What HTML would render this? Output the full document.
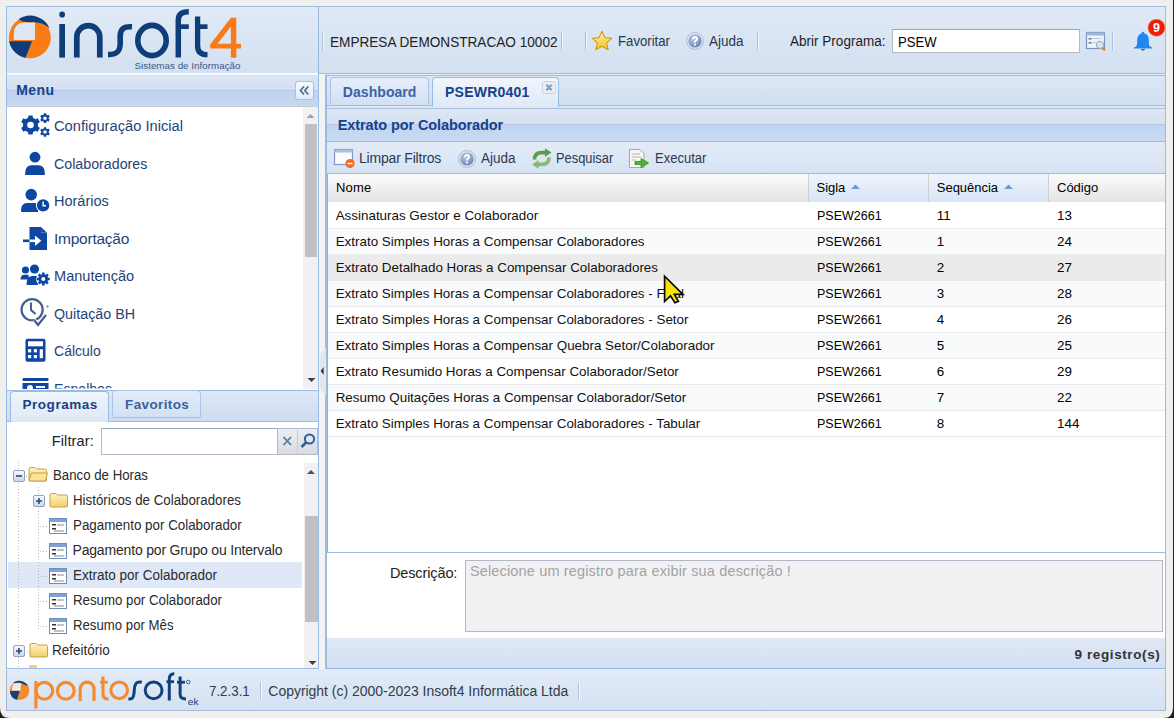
<!DOCTYPE html>
<html><head><meta charset="utf-8">
<style>
*{box-sizing:border-box;margin:0;padding:0}
html,body{width:1174px;height:718px;overflow:hidden}
body{position:relative;background:#efefed;font-family:"Liberation Sans",sans-serif;color:#000}
.a{position:absolute}
.t{position:absolute;white-space:nowrap;line-height:1}
/* panels */
#logo{left:6px;top:6px;width:314px;height:68px;border:1px solid #9fbbe2;border-right:2px solid #9ab8e0;background:linear-gradient(#e1eaf6,#d3e0f1)}
#hdr{left:319px;top:6px;width:847px;height:68px;border:1px solid #9fbbe2;border-left:none;background:linear-gradient(#e0e9f6,#d3e0f1)}
#menu{left:6px;top:73px;width:313px;height:318px;border:1px solid #99bbe8;border-top:none;background:#fff}
#menuh{left:6px;top:74px;width:313px;height:33px;border-left:1px solid #99bbe8;border-right:1px solid #99bbe8;background:linear-gradient(#eef6fc 0 1px,#dce6f4 1px,#d3e0f1 16px,#b9c5e6 16px 17px,#bfd2ee 17px,#c6d8f1 32px,#c5ccd8 32px)}
#split{left:319px;top:74px;width:7px;height:595px;background:#f4f3f4}
#progs{left:6px;top:390px;width:313px;height:279px;border:1px solid #99bbe8;border-top:none;background:#fff}
#tabstrip1{left:6px;top:390px;width:313px;height:32px;border:1px solid #99bbe8;background:linear-gradient(#dfe8f6,#cedcf0)}
#footer{left:6px;top:669px;width:1160px;height:42px;border:1px solid #a3b9d9;border-top:1px solid #e6eef9;background:linear-gradient(#e2ebf7,#d4e1f2)}
#right{left:325px;top:74px;width:841px;height:595px;border:1px solid #99bbe8;border-left:2px solid #99bbe8;background:#fff}
#tabstrip2{left:325px;top:74px;width:841px;height:35px;border-top:1px solid #e4edf8;border-left:2px solid #99bbe8;border-right:1px solid #99bbe8;background:linear-gradient(#a9bdd8 0 1px,#dde7f5 1px,#d0def1 30px,#a8bcd8 30px 31px,#dfe9f6 31px 33px,#a9c0df 33px)}
#ptitle{left:325px;top:109px;width:841px;height:33px;border-left:2px solid #99bbe8;border-right:1px solid #99bbe8;border-bottom:1px solid #99bbe8;background:linear-gradient(#dde7f4 0,#d5e1f1 15px,#b9c5e6 15px 16px,#c1d4ef 16px,#c9dbf3 32px)}
#tbar{left:325px;top:142px;width:841px;height:32px;border-left:2px solid #99bbe8;border-right:1px solid #99bbe8;border-bottom:1px solid #99bbe8;background:linear-gradient(#e3ebf6,#d7e3f3)}
#ghead{left:327px;top:174px;width:838px;height:28px;background:linear-gradient(#fafafa,#e6e6e6)}
.hcell{position:absolute;top:0;height:28px;border-right:1px solid #c5c5c5}
.sorted{background:linear-gradient(#ebf3fd,#dae6f6)}
.row{position:absolute;left:327px;width:838px;height:26px;border-bottom:1px solid #ededed}
.cell{position:absolute;top:6px;font-size:13.3px;line-height:1;white-space:nowrap;color:#000}
#desc{left:325px;top:552px;width:841px;height:86px;border-left:2px solid #99bbe8;border-right:1px solid #99bbe8;border-top:1px solid #99bbe8;background:#fff}
#status{left:325px;top:638px;width:841px;height:31px;border-left:2px solid #99bbe8;border-right:1px solid #99bbe8;border-bottom:1px solid #8db2e3;background:linear-gradient(#dfe8f5,#d3e0f2)}
.sb{position:absolute;background:#f0f0f0}
.thumb{position:absolute;background:#c1c1c1}
.sep{position:absolute;width:1px;background:#b6c9e3;border-right:1px solid #f3f7fc}
</style></head><body>
<div id="logo" class="a"></div>
<div id="hdr" class="a"></div>
<div id="menu" class="a"></div>
<div id="menuh" class="a"></div>
<div id="split" class="a"></div>
<div id="progs" class="a"></div>
<div id="tabstrip1" class="a"></div>
<div id="right" class="a"></div>
<div id="tabstrip2" class="a"></div>
<div id="ptitle" class="a"></div>
<div id="tbar" class="a"></div>
<div id="ghead" class="a"></div>
<div id="desc" class="a"></div>
<div id="status" class="a"></div>
<div id="footer" class="a"></div>
<svg class="a" style="left:0;top:0" width="320" height="75" viewBox="0 0 320 75">
<circle cx="29.9" cy="37.4" r="20.9" fill="#fa7a14"/>
<path d="M18.5,19.3 A20.9,20.9 0 0 1 49.6,28.2 Q43,22 34,22.2 Q27,22.4 22.6,21.6 Z" fill="#0f3d79"/>
<path d="M13.8,40 L13.8,33 Q14.5,23 24,22.6 L35,22.6 L35,40 Z" fill="#dde7f4"/>
<path d="M9.1,41.2 L32,41.2 L25.6,57.7 A20.9,20.9 0 0 1 9.1,41.2 Z" fill="#0f3d79"/>
<g fill="none" stroke="#0f3d79" stroke-width="5.7">
<path d="M62.15,24 V57.6"/>
<path d="M76.8,57.6 V37.2 A11.5,11.5 0 0 1 99.8,37.2 V57.6"/>
<path d="M132,26.8 C124,26.3 120.3,28.5 120.2,36 L120.2,44 C120,52 116,54.6 108,54.6" stroke-width="5.6"/>
<ellipse cx="152" cy="40.5" rx="14.2" ry="15.1" stroke-width="5.6"/>
<path d="M178.3,57.4 V20 Q178.3,11.8 188.8,11.8" stroke-width="5.5"/>
<path d="M178,26.65 H188.8" stroke-width="4.7"/>
<path d="M197.6,16.5 V46 Q197.6,54.7 207.5,54.7" stroke-width="5.3"/>
<path d="M195,26.65 H207.5" stroke-width="4.7"/>
</g>
<rect x="59.3" y="11.6" width="5.7" height="6" rx="2.8" fill="#0f3d79"/>
<path fill="#fa7a14" fill-rule="evenodd" d="M230.9,17.7 L236.3,17.7 L236.3,43.8 L241,43.8 L241,48.5 L236.3,48.5 L236.3,57.8 L230.9,57.8 L230.9,48.5 L210.2,48.5 L210.2,44.6 Z M230.9,26.5 L230.9,43.8 L217.6,43.8 Z"/>
<text x="134.5" y="69.3" font-family="Liberation Sans" font-size="9.6" fill="#3c5a8a" textLength="106" lengthAdjust="spacingAndGlyphs">Sistemas de Informação</text>
</svg>
<div class="a" style="left:322px;top:32px;width:1px;height:18px;background:#a9bedb;box-shadow:1px 0 0 #f5f8fc"></div>
<div class="a" style="left:561px;top:32px;width:1px;height:18px;background:#a9bedb;box-shadow:1px 0 0 #f5f8fc"></div>
<div class="a" style="left:585px;top:32px;width:1px;height:18px;background:#a9bedb;box-shadow:1px 0 0 #f5f8fc"></div>
<div class="a" style="left:757px;top:32px;width:1px;height:18px;background:#a9bedb;box-shadow:1px 0 0 #f5f8fc"></div>
<div class="a" style="left:1112px;top:32px;width:1px;height:18px;background:#a9bedb;box-shadow:1px 0 0 #f5f8fc"></div>
<svg class="a" style="left:591px;top:30px" width="22" height="22" viewBox="0 0 22 22">
<defs><linearGradient id="gs" x1="0" y1="0" x2="0" y2="1"><stop offset="0" stop-color="#fff3a8"/><stop offset="1" stop-color="#f6c02a"/></linearGradient></defs>
<path d="M11,1.2 L13.9,7.6 L20.8,8.2 L15.6,12.8 L17.2,19.8 L11,16.2 L4.8,19.8 L6.4,12.8 L1.2,8.2 L8.1,7.6 Z" fill="url(#gs)" stroke="#d49a10" stroke-width="1.1" stroke-linejoin="round"/>
</svg>
<svg class="a" style="left:686px;top:32px" width="18" height="18" viewBox="0 0 18 18">
<defs><radialGradient id="gh686" cx="0.4" cy="0.35" r="0.75"><stop offset="0" stop-color="#b9cbe6"/><stop offset="1" stop-color="#5f80b4"/></radialGradient></defs>
<circle cx="9" cy="9" r="8.4" fill="#e3e9f2" stroke="#a7b8d0" stroke-width="1"/>
<circle cx="9" cy="9" r="6.6" fill="url(#gh686)"/>
<path d="M6.9,7.2 Q7,5 9.1,5 Q11.2,5.1 11.2,6.9 Q11.1,8.2 9.8,8.8 Q9,9.3 9,10.4" fill="none" stroke="#fff" stroke-width="1.8"/>
<circle cx="9" cy="12.6" r="1.1" fill="#fff"/>
</svg>
<div class="a" style="left:892px;top:29px;width:188px;height:24px;background:#fff;border:1px solid #b4b9c4;border-top-color:#9ea5b3"></div>
<svg class="a" style="left:1085px;top:31px" width="23" height="21" viewBox="0 0 23 21">
<rect x="1.5" y="1.5" width="18" height="16" fill="#eef3fa" stroke="#7b94bd" stroke-width="1.2"/>
<rect x="1.5" y="1.5" width="18" height="3" fill="#9fb6d9"/>
<rect x="3.5" y="7" width="3" height="1.6" fill="#6a86b5"/><rect x="7.5" y="7" width="9" height="1" fill="#b9c7dc"/>
<rect x="3.5" y="11" width="3" height="1.6" fill="#6a86b5"/><rect x="7.5" y="11" width="4" height="1" fill="#b9c7dc"/>
<circle cx="15" cy="14" r="3.6" fill="#d7e5f5" stroke="#8fa9cc" stroke-width="1"/>
<path d="M17.5,16.5 L20,19.5" stroke="#d08a3a" stroke-width="2"/>
</svg>
<svg class="a" style="left:1132px;top:30px" width="22" height="22" viewBox="0 0 22 22">
<path d="M11,1.8 Q12.3,1.8 12.3,3.2 Q16.8,4.6 16.8,10.5 L17,15 Q18,17 20.2,17.6 L20.2,18.6 L1.8,18.6 L1.8,17.6 Q4,17 5,15 L5.2,10.5 Q5.2,4.6 9.7,3.2 Q9.7,1.8 11,1.8 Z" fill="#1e88f0"/>
<path d="M8.6,19 Q11,22.6 13.4,19 Z" fill="#1a6fd0"/>
</svg>
<svg class="a" style="left:1147px;top:18px" width="20" height="20" viewBox="0 0 20 20">
<circle cx="9.5" cy="9.7" r="8.6" fill="#ee1b0c" stroke="#f89a5a" stroke-width="0.8"/>
<text x="9.6" y="14" text-anchor="middle" font-family="Liberation Sans" font-weight="bold" font-size="12.5" fill="#fff">9</text>
</svg>
<div class="a" style="left:295px;top:81px;width:19px;height:19px;border:1px solid #a7c0e3;border-radius:3px;background:linear-gradient(#f7faff,#e3ecf8)"></div>
<svg class="a" style="left:295px;top:81px" width="19" height="19" viewBox="0 0 19 19">
<path d="M9,5.5 L5.5,9.5 L9,13.5 M13.3,5.5 L9.8,9.5 L13.3,13.5" fill="none" stroke="#4a6a9c" stroke-width="1.7"/>
</svg>
<svg class="a" style="left:0;top:0" width="60" height="140" viewBox="0 0 60 140">
<path fill="#0d47a1" fill-rule="evenodd" d="M32.92,117.80 L32.64,115.44 L28.36,115.44 L28.08,117.80 L25.47,119.30 L23.29,118.37 L21.15,122.07 L23.05,123.50 L23.05,126.50 L21.15,127.93 L23.29,131.63 L25.47,130.70 L28.08,132.20 L28.36,134.56 L32.64,134.56 L32.92,132.20 L35.53,130.70 L37.71,131.63 L39.85,127.93 L37.95,126.50 L37.95,123.50 L39.85,122.07 L37.71,118.37 L35.53,119.30 Z M33.8,125 A3.3,3.3 0 1 0 27.2,125 A3.3,3.3 0 1 0 33.8,125 Z"/>
<path fill="#0d47a1" fill-rule="evenodd" d="M46.21,114.60 L46.17,113.34 L43.83,113.34 L43.79,114.60 L42.49,115.35 L41.37,114.76 L40.21,116.78 L41.27,117.45 L41.27,118.95 L40.21,119.62 L41.37,121.64 L42.49,121.05 L43.79,121.80 L43.83,123.06 L46.17,123.06 L46.21,121.80 L47.51,121.05 L48.63,121.64 L49.79,119.62 L48.73,118.95 L48.73,117.45 L49.79,116.78 L48.63,114.76 L47.51,115.35 Z M46.8,118.2 A1.8,1.8 0 1 0 43.2,118.2 A1.8,1.8 0 1 0 46.8,118.2 Z"/>
<path fill="#0d47a1" fill-rule="evenodd" d="M46.21,128.40 L46.17,127.14 L43.83,127.14 L43.79,128.40 L42.49,129.15 L41.37,128.56 L40.21,130.58 L41.27,131.25 L41.27,132.75 L40.21,133.42 L41.37,135.44 L42.49,134.85 L43.79,135.60 L43.83,136.86 L46.17,136.86 L46.21,135.60 L47.51,134.85 L48.63,135.44 L49.79,133.42 L48.73,132.75 L48.73,131.25 L49.79,130.58 L48.63,128.56 L47.51,129.15 Z M46.8,132 A1.8,1.8 0 1 0 43.2,132 A1.8,1.8 0 1 0 46.8,132 Z"/>
</svg>
<svg class="a" style="left:24px;top:151px" width="22" height="25" viewBox="0 0 22 25">
<circle cx="11" cy="6.2" r="5.4" fill="#0d47a1"/>
<path d="M1,23.2 Q1,14.5 7,14.2 L15,14.2 Q21,14.5 21,23.2 Q21,24 20,24 L2,24 Q1,24 1,23.2 Z" fill="#0d47a1"/>
</svg>
<svg class="a" style="left:20px;top:188px" width="31" height="25" viewBox="0 0 31 25">
<circle cx="11.2" cy="6.6" r="5.8" fill="#0d47a1"/>
<path d="M1,22.5 Q1,15.5 6.5,15 L16,15 Q18,15.2 19,16 L18,24 L2,24 Q1,24 1,22.5 Z" fill="#0d47a1"/>
<circle cx="23.1" cy="17.4" r="7.2" fill="#fff"/>
<circle cx="23.1" cy="17.4" r="6.2" fill="#0d47a1"/>
<path d="M23.1,13.5 V17.8 H26" fill="none" stroke="#fff" stroke-width="1.4"/>
</svg>
<svg class="a" style="left:22px;top:226px" width="26" height="25" viewBox="0 0 26 25">
<path d="M7.5,1 L19,1 L25,7 L25,24 L7.5,24 Z" fill="#0d47a1"/>
<path d="M19,1 L19,7 L25,7" fill="#fff" opacity="0.9"/>
<path d="M19.2,1.2 L24.8,6.8 L19.2,6.8 Z" fill="#0d47a1"/>
<rect x="1" y="13.5" width="9" height="2.6" fill="#0d47a1"/>
<rect x="7.5" y="13.5" width="7" height="2.6" fill="#fff"/>
<path d="M13,9.5 L19.3,14.8 L13,20.1 Z" fill="#fff"/>
</svg>
<svg class="a" style="left:20px;top:264px" width="31" height="23" viewBox="0 0 31 23">
<g fill="#0d47a1">
<circle cx="5.5" cy="6" r="3.6"/><path d="M0.5,15.5 Q0.5,11 4.5,10.8 L8.5,10.8 L9,15.5 Z"/>
<circle cx="14.5" cy="5" r="4.6"/><path d="M6.5,21 Q6.5,12.2 12,12 L18,12 L18,21 Z"/>
</g>
<circle cx="23.3" cy="15" r="7.2" fill="#fff"/>
<g fill="#0d47a1"><circle cx="23.3" cy="15" r="4.8"/></g>
<g stroke="#0d47a1" stroke-width="2.6"><path d="M23.3,8.5 V21.5 M16.8,15 H29.8 M18.7,10.4 L27.9,19.6 M27.9,10.4 L18.7,19.6"/></g>
<circle cx="23.3" cy="15" r="2" fill="#fff"/>
</svg>
<svg class="a" style="left:19px;top:297px" width="30" height="30" viewBox="0 0 30 30">
<circle cx="13.1" cy="12.7" r="10.6" fill="none" stroke="#425f8f" stroke-width="2.2"/>
<path d="M12,5.5 V13 L16.5,17" fill="none" stroke="#425f8f" stroke-width="2"/>
<path d="M15,23 L19,28 L27,18" fill="none" stroke="#fff" stroke-width="4"/>
<path d="M15,23 L19,28 L27,18" fill="none" stroke="#425f8f" stroke-width="2.2"/>
<path d="M27,9.5 H30 M28.5,8 V11" stroke="#8ea3c4" stroke-width="1"/>
</svg>
<svg class="a" style="left:25px;top:338px" width="21" height="25" viewBox="0 0 21 25">
<rect x="0.5" y="0.8" width="20" height="23" rx="2" fill="#0d47a1"/>
<rect x="3" y="3.3" width="15" height="5" fill="#fff"/>
<rect x="3" y="11.2" width="3.2" height="3.2" fill="#fff"/><rect x="8.8" y="11.2" width="3.2" height="3.2" fill="#fff"/>
<rect x="3" y="17" width="3.2" height="3.2" fill="#fff"/><rect x="8.8" y="17" width="3.2" height="3.2" fill="#fff"/>
<rect x="14.7" y="11.2" width="3.2" height="9" fill="#fff"/>
</svg>
<div class="a" style="left:22px;top:377px;width:27px;height:12px;overflow:hidden">
<svg width="27" height="24" viewBox="0 0 27 24">
<rect x="0.5" y="1" width="26" height="3" rx="1" fill="#0d47a1"/>
<rect x="0.5" y="6" width="26" height="17" fill="#0d47a1"/>
<circle cx="8" cy="11" r="3" fill="#fff"/><rect x="14" y="9" width="9" height="2" fill="#fff"/>
</svg></div>
<div class="a" style="left:303px;top:107px;width:15px;height:282px;background:#f1f1f1"></div>
<div class="a" style="left:305px;top:124px;width:12px;height:133px;background:#c1c1c1"></div>
<svg class="a" style="left:303px;top:110px" width="15" height="10"><path d="M3.5,8 L7.5,4 L11.5,8 Z" fill="#a0a0a0"/></svg>
<svg class="a" style="left:303px;top:375px" width="15" height="10"><path d="M4.5,3 L8.5,7 L12.5,3 Z" fill="#404040"/></svg>
<svg class="a" style="left:318px;top:348px" width="9" height="47" viewBox="0 0 9 47">
<path d="M8,0 Q2,4 2,10 L2,37 Q2,43 8,47 Z" fill="#e3e6ea"/>
<path d="M5.6,19 L2.6,23 L5.6,27 Z" fill="#333"/>
</svg>
<div class="a" style="left:10px;top:391px;width:99px;height:31px;border:1px solid #99bbe8;border-bottom:none;border-radius:4px 4px 0 0;background:linear-gradient(#f1f5fb,#dde8f6)"></div>
<div class="a" style="left:112px;top:390px;width:89px;height:28px;border:1px solid #a9c4e8;border-radius:4px 4px 0 0;background:linear-gradient(#e4edf8,#d2e0f3)"></div>
<div class="a" style="left:101px;top:428px;width:176px;height:27px;background:#fff;border:1px solid #b5b8c8;border-top-color:#a0a5b5;border-right:none"></div>
<div class="a" style="left:277px;top:428px;width:21px;height:27px;background:linear-gradient(#eceef1,#d8dbe0);border:1px solid #b5b8c8;border-right:1px solid #c9ccd3"></div>
<div class="a" style="left:298px;top:428px;width:20px;height:27px;background:linear-gradient(#eceef1,#d8dbe0);border:1px solid #b5b8c8;border-left:none"></div>
<svg class="a" style="left:277px;top:428px" width="21" height="27"><path d="M6.5,9 L14,17 M14,9 L6.5,17" stroke="#5878a8" stroke-width="1.8"/></svg>
<svg class="a" style="left:298px;top:428px" width="20" height="27"><circle cx="11.5" cy="11" r="4.6" fill="none" stroke="#2f5f9f" stroke-width="2"/><path d="M8.3,14.3 L3.5,19" stroke="#2f5f9f" stroke-width="2.6"/></svg>
<div class="a" style="left:8px;top:562px;width:294px;height:26px;background:#dfe8f6"></div>
<div class="a" style="left:18px;top:462px;width:1px;height:206px;background:repeating-linear-gradient(#b8b8b8 0 1px,transparent 1px 3px)"></div>
<div class="a" style="left:38px;top:487px;width:1px;height:143px;background:repeating-linear-gradient(#b8b8b8 0 1px,transparent 1px 3px)"></div>
<div class="a" style="left:26px;top:476px;width:2px;height:1px;background:repeating-linear-gradient(90deg,#b8b8b8 0 1px,transparent 1px 3px)"></div>
<div class="a" style="left:40px;top:526px;width:8px;height:1px;background:repeating-linear-gradient(90deg,#b8b8b8 0 1px,transparent 1px 3px)"></div>
<div class="a" style="left:40px;top:551px;width:8px;height:1px;background:repeating-linear-gradient(90deg,#b8b8b8 0 1px,transparent 1px 3px)"></div>
<div class="a" style="left:40px;top:576px;width:8px;height:1px;background:repeating-linear-gradient(90deg,#b8b8b8 0 1px,transparent 1px 3px)"></div>
<div class="a" style="left:40px;top:601px;width:8px;height:1px;background:repeating-linear-gradient(90deg,#b8b8b8 0 1px,transparent 1px 3px)"></div>
<div class="a" style="left:40px;top:626px;width:8px;height:1px;background:repeating-linear-gradient(90deg,#b8b8b8 0 1px,transparent 1px 3px)"></div>
<div class="a" style="left:24px;top:651px;width:4px;height:1px;background:repeating-linear-gradient(90deg,#b8b8b8 0 1px,transparent 1px 3px)"></div>
<svg class="a" style="left:13px;top:470px" width="12" height="12" viewBox="0 0 12 12">
<defs><linearGradient id="ge470" x1="0" y1="0" x2="0" y2="1"><stop offset="0" stop-color="#fbfcfe"/><stop offset="1" stop-color="#c8d4e6"/></linearGradient></defs>
<rect x="0.5" y="0.5" width="11" height="11" rx="1.5" fill="url(#ge470)" stroke="#8fa2c0"/>
<path d="M3,6 H9" stroke="#2a4a80" stroke-width="1.6"/>
</svg>
<svg class="a" style="left:28px;top:466px" width="20" height="16" viewBox="0 0 20 16">
<defs><linearGradient id="gf466" x1="0" y1="0" x2="0" y2="1"><stop offset="0" stop-color="#fff4c4"/><stop offset="1" stop-color="#f2cf6a"/></linearGradient></defs>
<path d="M1,3 Q1,1.5 2.5,1.5 L7,1.5 L8.5,3 L17,3 Q18.5,3 18.5,4.5 L18.5,14 Q18.5,15 17.5,15 L2,15 Q1,15 1,14 Z" fill="url(#gf466)" stroke="#c9a04a" stroke-width="1"/>
<path d="M3.5,7 L19.5,7 L17.5,15 L1,15 Z" fill="#fbe39a" stroke="#c9a04a" stroke-width="1"/>
</svg>
<svg class="a" style="left:33px;top:495px" width="12" height="12" viewBox="0 0 12 12">
<defs><linearGradient id="ge495" x1="0" y1="0" x2="0" y2="1"><stop offset="0" stop-color="#fbfcfe"/><stop offset="1" stop-color="#c8d4e6"/></linearGradient></defs>
<rect x="0.5" y="0.5" width="11" height="11" rx="1.5" fill="url(#ge495)" stroke="#8fa2c0"/>
<path d="M3,6 H9 M6,3 V9" stroke="#2a4a80" stroke-width="1.6"/>
</svg>
<svg class="a" style="left:49px;top:492px" width="20" height="16" viewBox="0 0 20 16">
<defs><linearGradient id="gf492" x1="0" y1="0" x2="0" y2="1"><stop offset="0" stop-color="#fff4c4"/><stop offset="1" stop-color="#f2cf6a"/></linearGradient></defs>
<path d="M1,3 Q1,1.5 2.5,1.5 L7,1.5 L8.5,3 L17,3 Q18.5,3 18.5,4.5 L18.5,14 Q18.5,15 17.5,15 L2,15 Q1,15 1,14 Z" fill="url(#gf492)" stroke="#c9a04a" stroke-width="1"/>
<path d="M1.5,6 H18" stroke="#fbe8a8" stroke-width="1"/>
</svg>
<svg class="a" style="left:49px;top:518px" width="18" height="16" viewBox="0 0 18 16">
<rect x="0.5" y="0.5" width="17" height="15" fill="#fff" stroke="#6f8db8"/>
<rect x="1" y="1" width="16" height="3" fill="#7fa3d6"/>
<rect x="3" y="6" width="4" height="1.5" fill="#333"/><rect x="8" y="6.5" width="7" height="1" fill="#888"/>
<rect x="3" y="10" width="4" height="1.5" fill="#333"/><rect x="5" y="12.5" width="10" height="1" fill="#888"/>
</svg>
<svg class="a" style="left:49px;top:543px" width="18" height="16" viewBox="0 0 18 16">
<rect x="0.5" y="0.5" width="17" height="15" fill="#fff" stroke="#6f8db8"/>
<rect x="1" y="1" width="16" height="3" fill="#7fa3d6"/>
<rect x="3" y="6" width="4" height="1.5" fill="#333"/><rect x="8" y="6.5" width="7" height="1" fill="#888"/>
<rect x="3" y="10" width="4" height="1.5" fill="#333"/><rect x="5" y="12.5" width="10" height="1" fill="#888"/>
</svg>
<svg class="a" style="left:49px;top:568px" width="18" height="16" viewBox="0 0 18 16">
<rect x="0.5" y="0.5" width="17" height="15" fill="#fff" stroke="#6f8db8"/>
<rect x="1" y="1" width="16" height="3" fill="#7fa3d6"/>
<rect x="3" y="6" width="4" height="1.5" fill="#333"/><rect x="8" y="6.5" width="7" height="1" fill="#888"/>
<rect x="3" y="10" width="4" height="1.5" fill="#333"/><rect x="5" y="12.5" width="10" height="1" fill="#888"/>
</svg>
<svg class="a" style="left:49px;top:593px" width="18" height="16" viewBox="0 0 18 16">
<rect x="0.5" y="0.5" width="17" height="15" fill="#fff" stroke="#6f8db8"/>
<rect x="1" y="1" width="16" height="3" fill="#7fa3d6"/>
<rect x="3" y="6" width="4" height="1.5" fill="#333"/><rect x="8" y="6.5" width="7" height="1" fill="#888"/>
<rect x="3" y="10" width="4" height="1.5" fill="#333"/><rect x="5" y="12.5" width="10" height="1" fill="#888"/>
</svg>
<svg class="a" style="left:49px;top:618px" width="18" height="16" viewBox="0 0 18 16">
<rect x="0.5" y="0.5" width="17" height="15" fill="#fff" stroke="#6f8db8"/>
<rect x="1" y="1" width="16" height="3" fill="#7fa3d6"/>
<rect x="3" y="6" width="4" height="1.5" fill="#333"/><rect x="8" y="6.5" width="7" height="1" fill="#888"/>
<rect x="3" y="10" width="4" height="1.5" fill="#333"/><rect x="5" y="12.5" width="10" height="1" fill="#888"/>
</svg>
<svg class="a" style="left:13px;top:645px" width="12" height="12" viewBox="0 0 12 12">
<defs><linearGradient id="ge645" x1="0" y1="0" x2="0" y2="1"><stop offset="0" stop-color="#fbfcfe"/><stop offset="1" stop-color="#c8d4e6"/></linearGradient></defs>
<rect x="0.5" y="0.5" width="11" height="11" rx="1.5" fill="url(#ge645)" stroke="#8fa2c0"/>
<path d="M3,6 H9 M6,3 V9" stroke="#2a4a80" stroke-width="1.6"/>
</svg>
<svg class="a" style="left:29px;top:642px" width="20" height="16" viewBox="0 0 20 16">
<defs><linearGradient id="gf642" x1="0" y1="0" x2="0" y2="1"><stop offset="0" stop-color="#fff4c4"/><stop offset="1" stop-color="#f2cf6a"/></linearGradient></defs>
<path d="M1,3 Q1,1.5 2.5,1.5 L7,1.5 L8.5,3 L17,3 Q18.5,3 18.5,4.5 L18.5,14 Q18.5,15 17.5,15 L2,15 Q1,15 1,14 Z" fill="url(#gf642)" stroke="#c9a04a" stroke-width="1"/>
<path d="M1.5,6 H18" stroke="#fbe8a8" stroke-width="1"/>
</svg>
<div class="a" style="left:29px;top:665px;width:8px;height:3px;background:#f2d27a;border-radius:1px 1px 0 0"></div>
<div class="a" style="left:304px;top:463px;width:14px;height:205px;background:#f1f1f1"></div>
<div class="a" style="left:305px;top:516px;width:13px;height:106px;background:#c1c1c1"></div>
<svg class="a" style="left:304px;top:466px" width="14" height="10"><path d="M3,8 L7,4 L11,8 Z" fill="#505050"/></svg>
<svg class="a" style="left:304px;top:658px" width="14" height="10"><path d="M4.5,3 L8.5,7 L12.5,3 Z" fill="#404040"/></svg>
<div class="a" style="left:330px;top:77px;width:99px;height:28px;border:1px solid #a9c4e8;border-bottom:none;border-radius:4px 4px 0 0;background:linear-gradient(#e6eef9,#d2e0f3)"></div>
<div class="a" style="left:432px;top:77px;width:127px;height:30px;border:1px solid #99bbe8;border-bottom:none;border-radius:4px 4px 0 0;background:linear-gradient(#f2f6fc,#dfe9f6)"></div>
<svg class="a" style="left:542px;top:81px" width="14" height="13" viewBox="0 0 14 13">
<rect x="0.5" y="0.5" width="13" height="12" rx="2" fill="#e8eef6" stroke="#c6d3e5"/>
<path d="M4.3,3.8 L9.7,9.2 M9.7,3.8 L4.3,9.2" stroke="#7f9cc0" stroke-width="2"/>
</svg>
<svg class="a" style="left:333px;top:148px" width="23" height="21" viewBox="0 0 23 21">
<rect x="1.5" y="1.5" width="18" height="15" fill="#f9fbfd" stroke="#7f9cc6" stroke-width="1.2"/>
<rect x="1.5" y="1.5" width="18" height="3" fill="#aac0e0"/>
<circle cx="17" cy="15.5" r="4.6" fill="#f26b1d"/>
<path d="M14.5,15.5 H19.5" stroke="#fff" stroke-width="1.6"/>
</svg>
<svg class="a" style="left:458px;top:150px" width="18" height="18" viewBox="0 0 18 18">
<defs><radialGradient id="gh458" cx="0.4" cy="0.35" r="0.75"><stop offset="0" stop-color="#b9cbe6"/><stop offset="1" stop-color="#5f80b4"/></radialGradient></defs>
<circle cx="9" cy="9" r="8.4" fill="#e3e9f2" stroke="#a7b8d0" stroke-width="1"/>
<circle cx="9" cy="9" r="6.6" fill="url(#gh458)"/>
<path d="M6.9,7.2 Q7,5 9.1,5 Q11.2,5.1 11.2,6.9 Q11.1,8.2 9.8,8.8 Q9,9.3 9,10.4" fill="none" stroke="#fff" stroke-width="1.8"/>
<circle cx="9" cy="12.6" r="1.1" fill="#fff"/>
</svg>
<svg class="a" style="left:530px;top:147px" width="24" height="23" viewBox="530 147 24 23">
<path d="M534.5,159.5 Q534.5,152.6 541.5,152.6 L545.5,152.6" fill="none" stroke="#5f9c4a" stroke-width="3.6"/>
<path d="M545,148.2 L551.5,152.6 L545,157 Z" fill="#5f9c4a"/>
<path d="M549,157.5 Q549,164.4 542,164.4 L538,164.4" fill="none" stroke="#86b972" stroke-width="3.6"/>
<path d="M538.5,160 L532,164.4 L538.5,168.8 Z" fill="#86b972"/>
</svg>
<svg class="a" style="left:628px;top:148px" width="23" height="22" viewBox="0 0 23 22">
<path d="M1.5,1.5 L12,1.5 L16,5.5 L16,19.5 L1.5,19.5 Z" fill="#f7f7f2" stroke="#a9a9a0" stroke-width="1"/>
<path d="M4,6 H12 M4,9 H13 M4,12 H8" stroke="#b8b8b0" stroke-width="1"/>
<path d="M7,13.5 H13 V10.5 L20.5,15 L13,19.5 V16.5 H7 Z" fill="#4cb82f" stroke="#2f8a1c" stroke-width="0.8"/>
</svg>
<div class="a" style="left:327px;top:174px;width:482px;height:28px;background:linear-gradient(#fbfbfb,#e4e4e4);border-right:1px solid #cfcfcf"></div>
<div class="a" style="left:809px;top:174px;width:120px;height:28px;background:linear-gradient(#edf4fd,#d9e5f6);border-right:1px solid #cfcfcf"></div>
<div class="a" style="left:929px;top:174px;width:120px;height:28px;background:linear-gradient(#edf4fd,#d9e5f6);border-right:1px solid #cfcfcf"></div>
<div class="a" style="left:1049px;top:174px;width:116px;height:28px;background:linear-gradient(#fbfbfb,#e4e4e4)"></div>
<svg class="a" style="left:850px;top:183px" width="12" height="8"><path d="M1,6 L5.5,1.5 L10,6 Z" fill="#6a9ad8"/></svg>
<svg class="a" style="left:1003px;top:183px" width="12" height="8"><path d="M1,6 L5.5,1.5 L10,6 Z" fill="#6a9ad8"/></svg>
<div class="a" style="left:327px;top:202px;width:838px;height:26px;background:#fff"></div>
<div class="a" style="left:327px;top:228px;width:838px;height:26px;background:#f9fafc"></div>
<div class="a" style="left:327px;top:254px;width:838px;height:26px;background:#ebebeb"></div>
<div class="a" style="left:327px;top:280px;width:838px;height:26px;background:#f9fafc"></div>
<div class="a" style="left:327px;top:306px;width:838px;height:26px;background:#fff"></div>
<div class="a" style="left:327px;top:332px;width:838px;height:26px;background:#f9fafc"></div>
<div class="a" style="left:327px;top:358px;width:838px;height:26px;background:#fff"></div>
<div class="a" style="left:327px;top:384px;width:838px;height:26px;background:#f9fafc"></div>
<div class="a" style="left:327px;top:410px;width:838px;height:26px;background:#fff"></div>
<div class="a" style="left:327px;top:228px;width:838px;height:1px;background:#e9e9e9"></div>
<div class="a" style="left:327px;top:254px;width:838px;height:1px;background:#e9e9e9"></div>
<div class="a" style="left:327px;top:280px;width:838px;height:1px;background:#e9e9e9"></div>
<div class="a" style="left:327px;top:306px;width:838px;height:1px;background:#e9e9e9"></div>
<div class="a" style="left:327px;top:332px;width:838px;height:1px;background:#e9e9e9"></div>
<div class="a" style="left:327px;top:358px;width:838px;height:1px;background:#e9e9e9"></div>
<div class="a" style="left:327px;top:384px;width:838px;height:1px;background:#e9e9e9"></div>
<div class="a" style="left:327px;top:410px;width:838px;height:1px;background:#e9e9e9"></div>
<div class="a" style="left:327px;top:436px;width:838px;height:1px;background:#e9e9e9"></div>
<div class="a" style="left:327px;top:174px;width:1px;height:378px;background:#8db4e8"></div>
<div class="a" style="left:465px;top:560px;width:698px;height:72px;background:#f1f1f3;border:1px solid #b3b8c6"></div>
<svg class="a" style="left:0;top:668px" width="210" height="45" viewBox="0 668 210 45">
<circle cx="19.6" cy="690.4" r="9.7" fill="#f58a2c"/>
<path d="M10,691 L19.5,691 L17,700 A9.7,9.7 0 0 1 10,691 Z" fill="#13407a"/>
<path d="M13,682.5 Q20,678 28,685 L26,685.5 Q20,681.5 15,683 Z" fill="#13407a"/>
<path d="M13.5,683.5 L21,683 L20.5,690.5 L12,690.5 Q12,686 13.5,683.5 Z" fill="#e5edf7"/>
<g fill="none" stroke="#f58a2c" stroke-width="3.1">
<path d="M35.9,681 V708.5"/>
<circle cx="44.3" cy="690.8" r="8.4"/>
<circle cx="65.8" cy="690.8" r="8.4"/>
<path d="M80.2,701 V689 A6.9,6.9 0 0 1 94,689 V701"/>
<path d="M103,676.4 V694 Q103,699 108.5,699"/>
<path d="M100,682.2 H107.7" stroke-width="2.8"/>
<circle cx="119.2" cy="690.3" r="8.3"/>
</g>
<g fill="none" stroke="#13407a" stroke-width="3">
<path d="M141.8,682.3 C135.8,680.6 134.6,685 134.3,690 C134,696.5 133,699.6 128.4,698.8"/>
<circle cx="153.6" cy="690.3" r="8.4"/>
<path d="M169.3,700.5 V679 Q169.3,673.7 174.3,673.7"/>
<path d="M166.5,681.7 H174" stroke-width="2.8"/>
<path d="M180.1,676.4 V694 Q180.1,699 186,699"/>
<path d="M177,682.2 H185" stroke-width="2.8"/>
</g>
<circle cx="188.3" cy="682" r="1.8" fill="none" stroke="#13407a" stroke-width="0.8"/>
<text x="187.8" y="704.5" font-family="Liberation Sans" font-size="9.5" fill="#13407a" textLength="10.8" lengthAdjust="spacingAndGlyphs">ek</text>
</svg>
<div class="a" style="left:260px;top:682px;width:1px;height:18px;background:#b3c6e0;box-shadow:1px 0 0 #f5f8fc"></div>
<div class="a" style="left:578px;top:682px;width:1px;height:18px;background:#b3c6e0;box-shadow:1px 0 0 #f5f8fc"></div>
<div class="a" style="left:1173px;top:0px;width:1px;height:718px;background:#262626"></div>
<svg class="a" style="left:0;top:708px" width="10" height="10"><path d="M0,0 Q0,10 10,10 L0,10 Z" fill="#1e1e1e"/></svg>
<svg class="a" style="left:1163px;top:708px" width="11" height="10"><path d="M10,0 Q10,10 0,10 L11,10 L11,0 Z" fill="#1e1e1e"/></svg>
<div class="t" style="left:330.40px;top:34.25px;font-size:15px;color:#222;transform:scaleX(0.9067);transform-origin:0 0;">EMPRESA DEMONSTRACAO 10002</div>
<div class="t" style="left:617.50px;top:33.90px;font-size:14px;color:#27384f;transform:scaleX(0.9414);transform-origin:0 0;">Favoritar</div>
<div class="t" style="left:709.40px;top:33.90px;font-size:14px;color:#27384f;transform:scaleX(0.9634);transform-origin:0 0;">Ajuda</div>
<div class="t" style="left:790.30px;top:34.30px;font-size:14px;color:#1e1e1e;transform:scaleX(0.9665);transform-origin:0 0;">Abrir Programa:</div>
<div class="t" style="left:897.70px;top:33.55px;font-size:15px;color:#000;transform:scaleX(0.8713);transform-origin:0 0;">PSEW</div>
<div class="t" style="left:16.20px;top:82.90px;font-size:14px;color:#15428b;font-weight:bold;letter-spacing:0.412px;">Menu</div>
<div class="t" style="left:53.90px;top:118.33px;font-size:15.5px;color:#1f4478;transform:scaleX(0.9475);transform-origin:0 0;">Configuração Inicial</div>
<div class="t" style="left:53.90px;top:155.79px;font-size:15.5px;color:#1f4478;transform:scaleX(0.9185);transform-origin:0 0;">Colaboradores</div>
<div class="t" style="left:53.90px;top:193.26px;font-size:15.5px;color:#1f4478;transform:scaleX(0.9355);transform-origin:0 0;">Horários</div>
<div class="t" style="left:53.90px;top:230.73px;font-size:15.5px;color:#1f4478;letter-spacing:-0.227px;">Importação</div>
<div class="t" style="left:53.90px;top:268.20px;font-size:15.5px;color:#1f4478;transform:scaleX(0.9401);transform-origin:0 0;">Manutenção</div>
<div class="t" style="left:53.90px;top:305.68px;font-size:15.5px;color:#1f4478;transform:scaleX(0.9216);transform-origin:0 0;">Quitação BH</div>
<div class="t" style="left:53.90px;top:343.14px;font-size:15.5px;color:#1f4478;transform:scaleX(0.9052);transform-origin:0 0;">Cálculo</div>
<div class="t" style="left:53.90px;top:380.61px;font-size:15.5px;color:#1f4478;transform:scaleX(0.9096);transform-origin:0 0;clip-path:inset(0 0 7.6px 0);">Espelhos</div>
<div class="t" style="left:22.50px;top:397.92px;font-size:13.5px;color:#15428b;font-weight:bold;letter-spacing:0.532px;">Programas</div>
<div class="t" style="left:125.00px;top:397.92px;font-size:13.5px;color:#3a60a0;font-weight:bold;letter-spacing:0.379px;">Favoritos</div>
<div class="t" style="left:51.80px;top:434.18px;font-size:14.5px;color:#222;letter-spacing:0.115px;">Filtrar:</div>
<div class="t" style="left:52.70px;top:468.00px;font-size:14px;color:#2a2a2a;transform:scaleX(0.9462);transform-origin:0 0;">Banco de Horas</div>
<div class="t" style="left:72.50px;top:492.70px;font-size:14px;color:#2a2a2a;transform:scaleX(0.9511);transform-origin:0 0;">Históricos de Colaboradores</div>
<div class="t" style="left:72.50px;top:517.80px;font-size:14px;color:#2a2a2a;transform:scaleX(0.9549);transform-origin:0 0;">Pagamento por Colaborador</div>
<div class="t" style="left:72.50px;top:542.80px;font-size:14px;color:#2a2a2a;letter-spacing:-0.180px;">Pagamento por Grupo ou Intervalo</div>
<div class="t" style="left:72.50px;top:567.80px;font-size:14px;color:#2a2a2a;transform:scaleX(0.9637);transform-origin:0 0;">Extrato por Colaborador</div>
<div class="t" style="left:72.50px;top:592.80px;font-size:14px;color:#2a2a2a;transform:scaleX(0.9478);transform-origin:0 0;">Resumo por Colaborador</div>
<div class="t" style="left:72.50px;top:617.80px;font-size:14px;color:#2a2a2a;transform:scaleX(0.9428);transform-origin:0 0;">Resumo por Mês</div>
<div class="t" style="left:52.00px;top:642.70px;font-size:14px;color:#2a2a2a;transform:scaleX(0.9646);transform-origin:0 0;">Refeitório</div>
<div class="t" style="left:342.80px;top:84.70px;font-size:14px;color:#3d62a0;font-weight:bold;letter-spacing:0.059px;">Dashboard</div>
<div class="t" style="left:445.00px;top:84.70px;font-size:14px;color:#15428b;font-weight:bold;letter-spacing:0.227px;">PSEWR0401</div>
<div class="t" style="left:337.70px;top:117.77px;font-size:14.5px;color:#15428b;font-weight:bold;letter-spacing:-0.094px;">Extrato por Colaborador</div>
<div class="t" style="left:359.00px;top:150.80px;font-size:14px;color:#2b3a52;letter-spacing:-0.192px;">Limpar Filtros</div>
<div class="t" style="left:481.40px;top:150.80px;font-size:14px;color:#2b3a52;transform:scaleX(0.9661);transform-origin:0 0;">Ajuda</div>
<div class="t" style="left:556.20px;top:150.80px;font-size:14px;color:#2b3a52;transform:scaleX(0.9186);transform-origin:0 0;">Pesquisar</div>
<div class="t" style="left:654.50px;top:150.80px;font-size:14px;color:#2b3a52;transform:scaleX(0.9303);transform-origin:0 0;">Executar</div>
<div class="t" style="left:336.00px;top:180.95px;font-size:13px;color:#000;letter-spacing:0.204px;">Nome</div>
<div class="t" style="left:816.50px;top:180.95px;font-size:13px;color:#000;letter-spacing:-0.030px;">Sigla</div>
<div class="t" style="left:936.80px;top:180.95px;font-size:13px;color:#000;letter-spacing:-0.019px;">Sequência</div>
<div class="t" style="left:1057.00px;top:180.95px;font-size:13px;color:#000;">Código</div>
<div class="t" style="left:335.70px;top:208.81px;font-size:13.4px;color:#111;">Assinaturas Gestor e Colaborador</div>
<div class="t" style="left:816.50px;top:208.81px;font-size:13.4px;color:#000;transform:scaleX(0.9331);transform-origin:0 0;">PSEW2661</div>
<div class="t" style="left:936.80px;top:208.81px;font-size:13.4px;color:#000;">11</div>
<div class="t" style="left:1057.00px;top:208.81px;font-size:13.4px;color:#000;">13</div>
<div class="t" style="left:335.70px;top:234.81px;font-size:13.4px;color:#111;">Extrato Simples Horas a Compensar Colaboradores</div>
<div class="t" style="left:816.50px;top:234.81px;font-size:13.4px;color:#000;transform:scaleX(0.9331);transform-origin:0 0;">PSEW2661</div>
<div class="t" style="left:936.80px;top:234.81px;font-size:13.4px;color:#000;">1</div>
<div class="t" style="left:1057.00px;top:234.81px;font-size:13.4px;color:#000;">24</div>
<div class="t" style="left:335.70px;top:260.81px;font-size:13.4px;color:#111;">Extrato Detalhado Horas a Compensar Colaboradores</div>
<div class="t" style="left:816.50px;top:260.81px;font-size:13.4px;color:#000;transform:scaleX(0.9331);transform-origin:0 0;">PSEW2661</div>
<div class="t" style="left:936.80px;top:260.81px;font-size:13.4px;color:#000;">2</div>
<div class="t" style="left:1057.00px;top:260.81px;font-size:13.4px;color:#000;">27</div>
<div class="t" style="left:335.70px;top:286.81px;font-size:13.4px;color:#111;">Extrato Simples Horas a Compensar Colaboradores - Filial</div>
<div class="t" style="left:816.50px;top:286.81px;font-size:13.4px;color:#000;transform:scaleX(0.9331);transform-origin:0 0;">PSEW2661</div>
<div class="t" style="left:936.80px;top:286.81px;font-size:13.4px;color:#000;">3</div>
<div class="t" style="left:1057.00px;top:286.81px;font-size:13.4px;color:#000;">28</div>
<div class="t" style="left:335.70px;top:312.81px;font-size:13.4px;color:#111;">Extrato Simples Horas a Compensar Colaboradores - Setor</div>
<div class="t" style="left:816.50px;top:312.81px;font-size:13.4px;color:#000;transform:scaleX(0.9331);transform-origin:0 0;">PSEW2661</div>
<div class="t" style="left:936.80px;top:312.81px;font-size:13.4px;color:#000;">4</div>
<div class="t" style="left:1057.00px;top:312.81px;font-size:13.4px;color:#000;">26</div>
<div class="t" style="left:335.70px;top:338.81px;font-size:13.4px;color:#111;">Extrato Simples Horas a Compensar Quebra Setor/Colaborador</div>
<div class="t" style="left:816.50px;top:338.81px;font-size:13.4px;color:#000;transform:scaleX(0.9331);transform-origin:0 0;">PSEW2661</div>
<div class="t" style="left:936.80px;top:338.81px;font-size:13.4px;color:#000;">5</div>
<div class="t" style="left:1057.00px;top:338.81px;font-size:13.4px;color:#000;">25</div>
<div class="t" style="left:335.70px;top:364.81px;font-size:13.4px;color:#111;">Extrato Resumido Horas a Compensar Colaborador/Setor</div>
<div class="t" style="left:816.50px;top:364.81px;font-size:13.4px;color:#000;transform:scaleX(0.9331);transform-origin:0 0;">PSEW2661</div>
<div class="t" style="left:936.80px;top:364.81px;font-size:13.4px;color:#000;">6</div>
<div class="t" style="left:1057.00px;top:364.81px;font-size:13.4px;color:#000;">29</div>
<div class="t" style="left:335.70px;top:390.81px;font-size:13.4px;color:#111;">Resumo Quitações Horas a Compensar Colaborador/Setor</div>
<div class="t" style="left:816.50px;top:390.81px;font-size:13.4px;color:#000;transform:scaleX(0.9331);transform-origin:0 0;">PSEW2661</div>
<div class="t" style="left:936.80px;top:390.81px;font-size:13.4px;color:#000;">7</div>
<div class="t" style="left:1057.00px;top:390.81px;font-size:13.4px;color:#000;">22</div>
<div class="t" style="left:335.70px;top:416.81px;font-size:13.4px;color:#111;">Extrato Simples Horas a Compensar Colaboradores - Tabular</div>
<div class="t" style="left:816.50px;top:416.81px;font-size:13.4px;color:#000;transform:scaleX(0.9331);transform-origin:0 0;">PSEW2661</div>
<div class="t" style="left:936.80px;top:416.81px;font-size:13.4px;color:#000;">8</div>
<div class="t" style="left:1057.00px;top:416.81px;font-size:13.4px;color:#000;">144</div>
<div class="t" style="left:389.90px;top:566.27px;font-size:14.5px;color:#222;letter-spacing:-0.111px;">Descrição:</div>
<div class="t" style="left:469.90px;top:563.97px;font-size:14.5px;color:#a3a3a3;letter-spacing:0.156px;">Selecione um registro para exibir sua descrição !</div>
<div class="t" style="left:1074.50px;top:648.12px;font-size:13.5px;color:#333;font-weight:bold;letter-spacing:0.606px;">9 registro(s)</div>
<div class="t" style="left:209.00px;top:683.80px;font-size:14px;color:#333c48;transform:scaleX(0.9526);transform-origin:0 0;">7.2.3.1</div>
<div class="t" style="left:268.30px;top:683.80px;font-size:14px;color:#333c48;letter-spacing:-0.025px;">Copyright (c) 2000-2023 Insoft4 Informática Ltda</div>
<svg class="a" style="left:650px;top:265px" width="50" height="50" viewBox="650 265 50 50">
<polygon points="664.60,276.20 664.60,301.50 670.53,295.74 674.90,302.72 678.39,301.33 674.37,294.35 682.92,294.35" fill="#f5e30a" stroke="#0a0a0a" stroke-width="1.7" stroke-linejoin="miter"/>
</svg>
</body></html>
